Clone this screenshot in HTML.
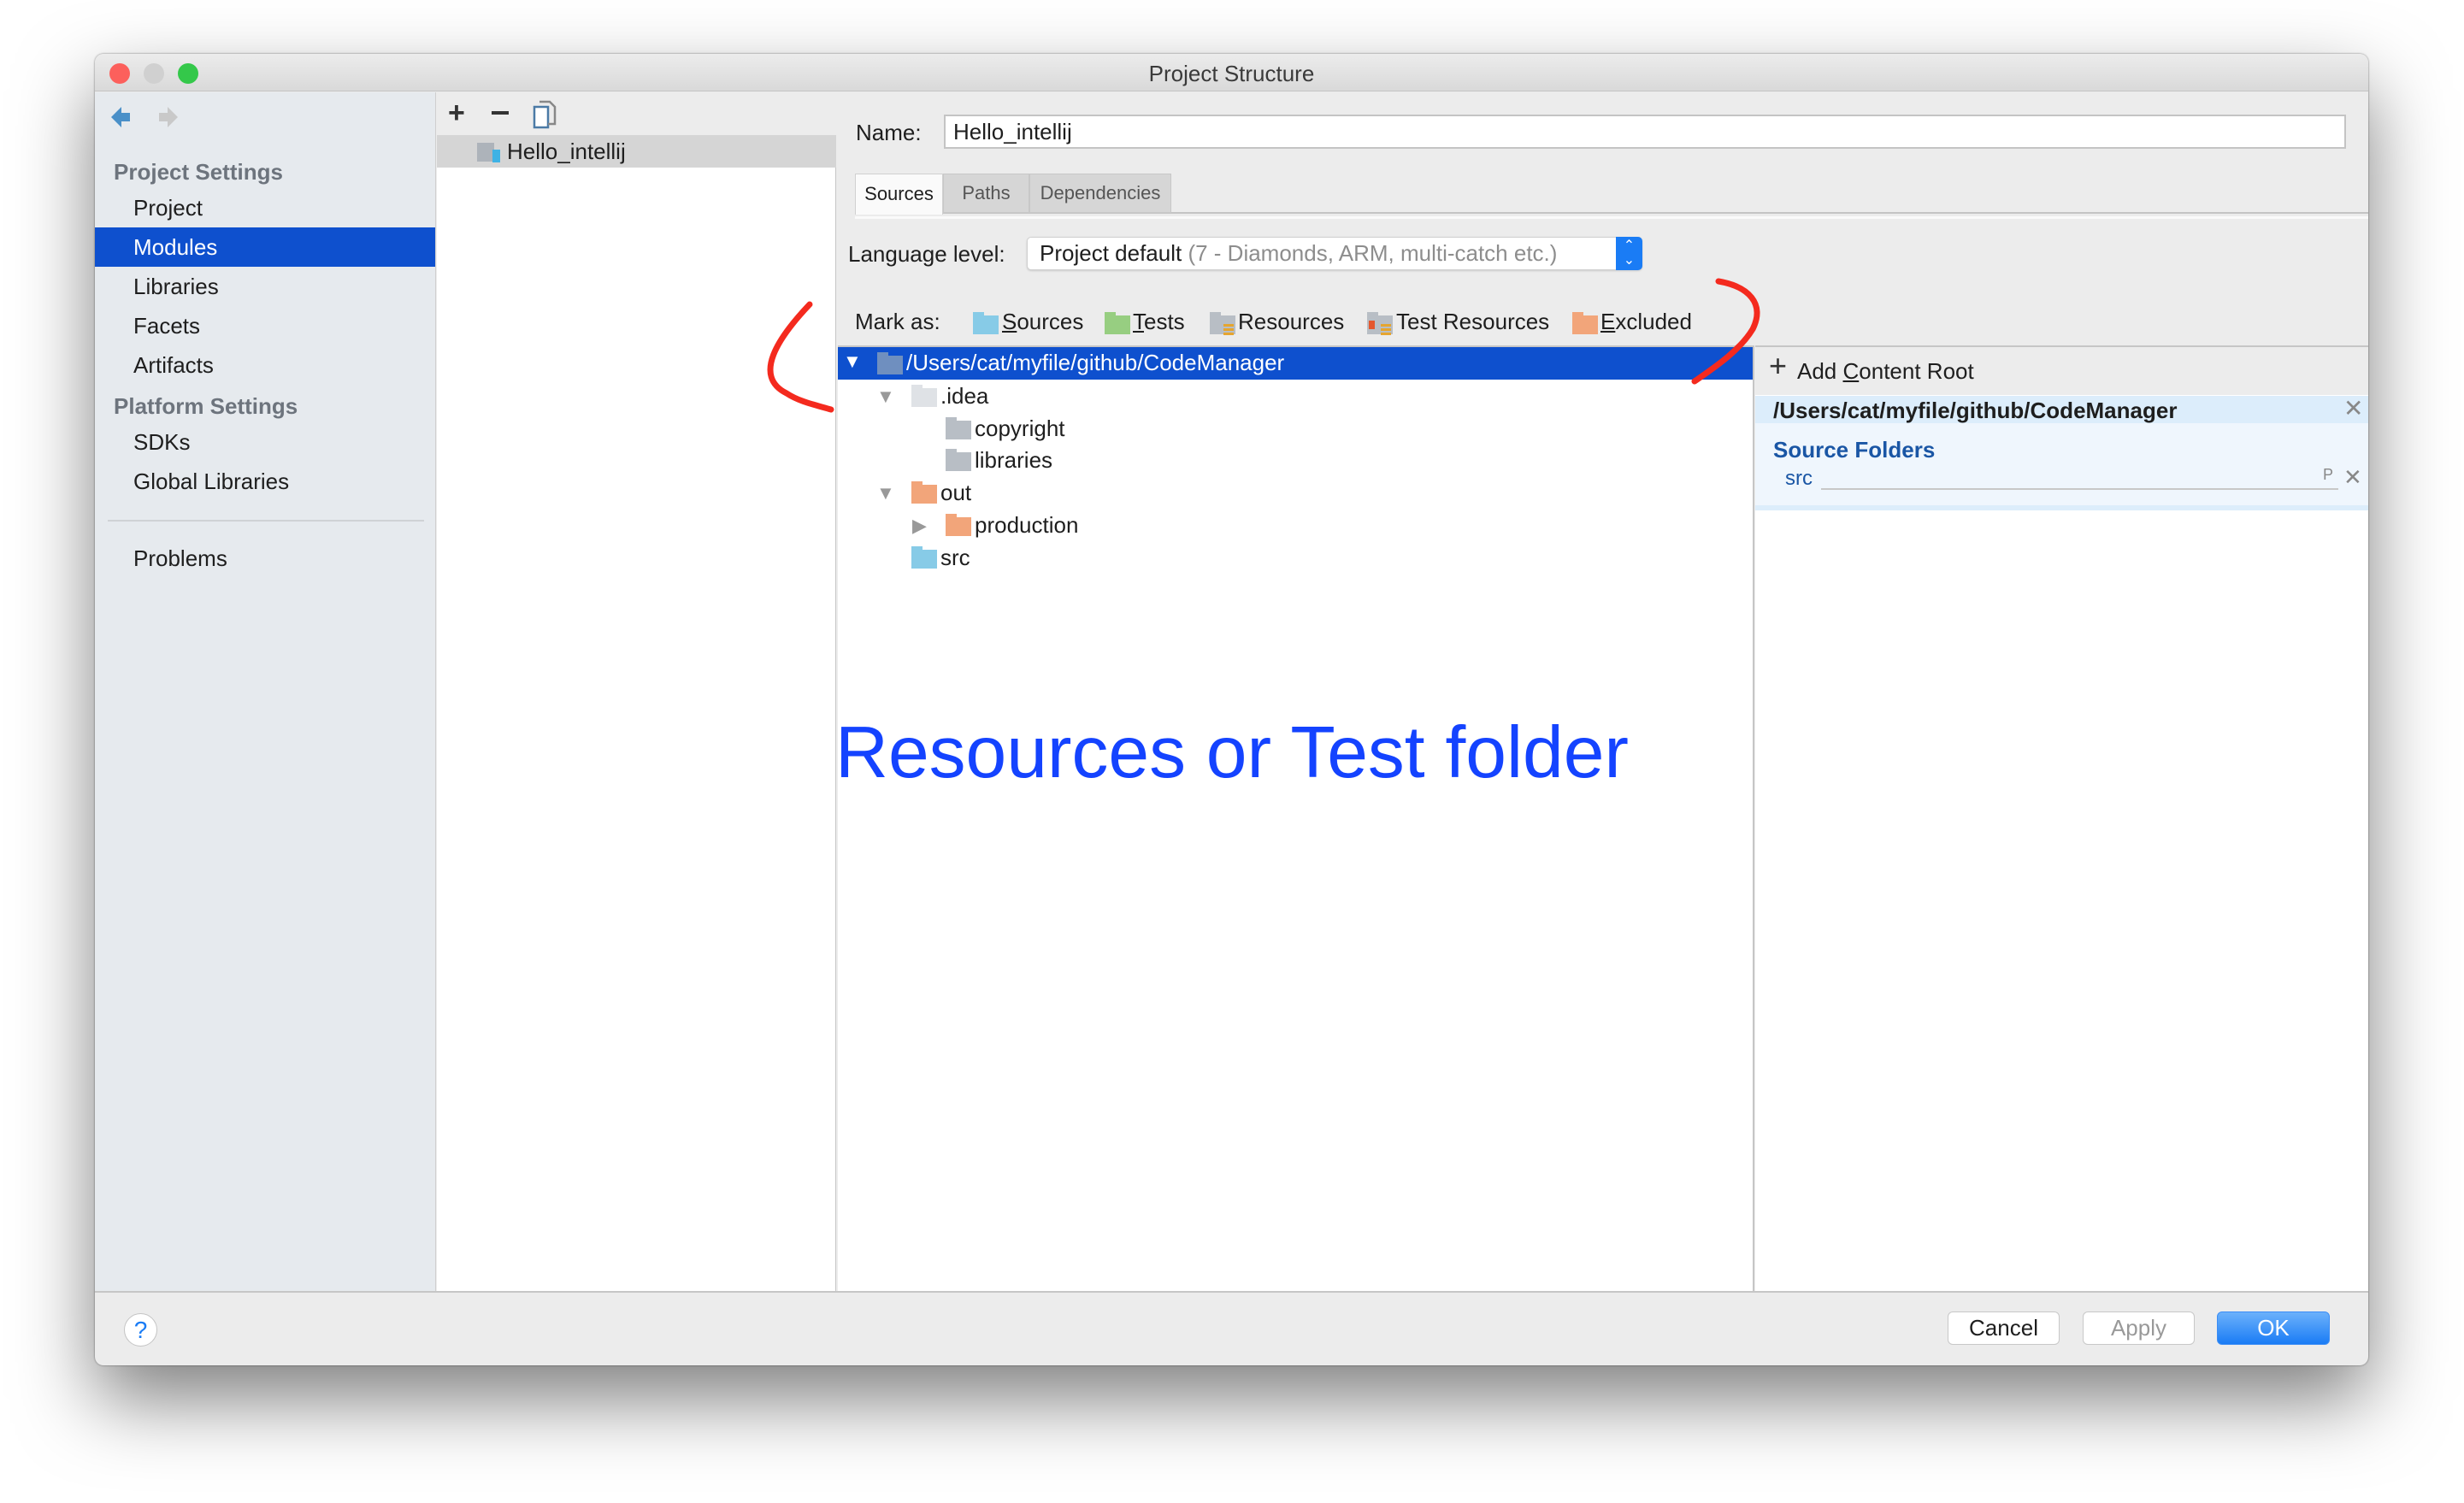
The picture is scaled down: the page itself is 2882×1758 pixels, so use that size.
<!DOCTYPE html>
<html><head><meta charset="utf-8"><style>
*{margin:0;padding:0;box-sizing:border-box}
body{width:2882px;height:1758px;background:#fff;position:relative;overflow:hidden;font-family:"Liberation Sans",sans-serif;color:#1e1e1e}
.a{position:absolute}
.win{left:111px;top:63px;width:2659px;height:1534px;border-radius:10px;background:#ececec;box-shadow:0 40px 90px rgba(0,0,0,.5),0 0 2px rgba(0,0,0,.5);overflow:hidden}
.t{font-size:26px;line-height:30px;white-space:nowrap}
.hd{color:#6d747d;font-weight:bold;font-size:26px}
.fold{position:absolute;width:30px;height:22px}
.fold:before{content:"";position:absolute;left:0;top:-4px;width:13px;height:6px;background:inherit}
.btn{position:absolute;height:39px;border-radius:6px;background:#fff;border:1px solid #c8c8c8;font-size:26px;text-align:center;line-height:37px}
</style></head><body>
<div class="a win">
 <div class="a" style="left:0;top:0;width:2659px;height:44px;background:linear-gradient(#ececec,#d9d9d9);border-bottom:1px solid #c4c4c4"></div>
 <div class="a" style="left:17px;top:11px;width:24px;height:24px;border-radius:50%;background:#fc605c"></div>
 <div class="a" style="left:57px;top:11px;width:24px;height:24px;border-radius:50%;background:#d0d0d0"></div>
 <div class="a" style="left:97px;top:11px;width:24px;height:24px;border-radius:50%;background:#34c84a"></div>
 <div class="a t" style="left:0;width:2659px;top:8px;text-align:center;color:#3a3a3a">Project Structure</div>
 <div class="a" style="left:0;top:45px;width:399px;height:1403px;background:#e6eaee;border-right:1px solid #cfcfcf"></div>
 <svg class="a" style="left:15px;top:58px" width="90" height="32"><path d="M4 16 L16 4 V11 H26 V21 H16 V28Z" fill="#4a90c8"/><path d="M82 16 L70 4 V11 H60 V21 H70 V28Z" fill="#c9c9c9"/></svg>
 <div class="a hd t" style="left:22px;top:123px">Project Settings</div>
 <div class="a t" style="left:45px;top:165px">Project</div>
 <div class="a" style="left:0;top:203px;width:398px;height:46px;background:#0e50ce"></div>
 <div class="a t" style="left:45px;top:211px;color:#fff">Modules</div>
 <div class="a t" style="left:45px;top:257px">Libraries</div>
 <div class="a t" style="left:45px;top:303px">Facets</div>
 <div class="a t" style="left:45px;top:349px">Artifacts</div>
 <div class="a hd t" style="left:22px;top:397px">Platform Settings</div>
 <div class="a t" style="left:45px;top:439px">SDKs</div>
 <div class="a t" style="left:45px;top:485px">Global Libraries</div>
 <div class="a" style="left:15px;top:545px;width:370px;height:2px;background:#cfd2d5"></div>
 <div class="a t" style="left:45px;top:575px">Problems</div>
 <div class="a" style="left:400px;top:45px;width:467px;height:1403px;background:#fff;border-right:1px solid #c6c6c6"></div>
 <div class="a" style="left:400px;top:45px;width:467px;height:50px;background:#ececec"></div>
 <div class="a" style="left:400px;top:95px;width:467px;height:38px;background:#d5d5d5"></div>
 <div class="a" style="left:413px;top:50px;font-size:34px;font-weight:bold;color:#333">+</div>
 <div class="a" style="left:464px;top:67px;width:20px;height:4px;background:#333"></div>
 <svg class="a" style="left:512px;top:54px" width="30" height="34"><rect x="2" y="8" width="16" height="24" fill="#fff" stroke="#4b7aa6" stroke-width="2.5"/><path d="M8 2h12l6 6v20h-8" fill="none" stroke="#888" stroke-width="2.5"/></svg>
 <div class="a" style="left:447px;top:104px;width:20px;height:22px;background:#adb3ba"></div>
 <div class="a" style="left:465px;top:112px;width:9px;height:15px;background:#3eb2e5"></div>
 <div class="a t" style="left:482px;top:99px">Hello_intellij</div>
 <div class="a t" style="left:890px;top:77px">Name:</div>
 <div class="a" style="left:993px;top:71px;width:1640px;height:40px;background:#fff;border:2px solid #c4c4c4"></div>
 <div class="a t" style="left:1004px;top:76px">Hello_intellij</div>
 <div class="a" style="left:889px;top:140px;width:1770px;height:47px;border-bottom:2px solid #c4c4c4"></div>
 <div class="a" style="left:889px;top:190px;width:1770px;height:3px;background:#fafafa"></div>
 <div class="a" style="left:889px;top:140px;width:103px;height:48px;background:#fafafa;border:1px solid #d0d0d0;border-bottom:none;font-size:22px;text-align:center;line-height:46px">Sources</div>
 <div class="a" style="left:992px;top:140px;width:101px;height:46px;background:#d6d6d6;border:1px solid #c8c8c8;font-size:22px;text-align:center;line-height:44px;color:#555">Paths</div>
 <div class="a" style="left:1093px;top:140px;width:166px;height:46px;background:#d6d6d6;border:1px solid #c8c8c8;font-size:22px;text-align:center;line-height:44px;color:#555">Dependencies</div>
 <div class="a t" style="left:881px;top:219px">Language level:</div>
 <div class="a" style="left:1090px;top:214px;width:720px;height:39px;background:#fff;border:1px solid #d0d0d0;border-radius:5px;box-shadow:0 1px 2px rgba(0,0,0,.15)"></div>
 <div class="a t" style="left:1105px;top:218px">Project default <span style="color:#8d8d8d">(7 - Diamonds, ARM, multi-catch etc.)</span></div>
 <div class="a" style="left:1779px;top:214px;width:31px;height:39px;background:#1a7cf5;border-radius:0 5px 5px 0;color:#fff;font-size:16px;text-align:center;line-height:17px;padding-top:2px">&#8963;<br>&#8964;</div>
 <div class="a t" style="left:889px;top:298px">Mark as:</div>
 <div class="fold" style="left:1027px;top:306px;background:#87cbe7"></div>
 <div class="a t" style="left:1061px;top:298px"><u>S</u>ources</div>
 <div class="fold" style="left:1181px;top:306px;background:#97ce81"></div>
 <div class="a t" style="left:1214px;top:298px"><u>T</u>ests</div>
 <div class="fold" style="left:1304px;top:306px;background:#b8bec5"></div>
 <div class="a" style="left:1320px;top:316px;width:12px;height:14px;background:repeating-linear-gradient(#e5a530 0 3px,transparent 3px 5px)"></div>
 <div class="a t" style="left:1337px;top:298px">Resources</div>
 <div class="fold" style="left:1488px;top:306px;background:#b8bec5"></div>
 <div class="a" style="left:1490px;top:312px;width:7px;height:10px;background:#e4572e"></div>
 <div class="a" style="left:1504px;top:316px;width:12px;height:14px;background:repeating-linear-gradient(#e5a530 0 3px,transparent 3px 5px)"></div>
 <div class="a t" style="left:1522px;top:298px">Test Resources</div>
 <div class="fold" style="left:1728px;top:306px;background:#f2a57a"></div>
 <div class="a t" style="left:1761px;top:298px"><u>E</u>xcluded</div>
 <div class="a" style="left:869px;top:341px;width:1072px;height:1107px;background:#fff;border-top:2px solid #c6c6c6;border-right:2px solid #c6c6c6"></div>
 <div class="a" style="left:869px;top:343px;width:1070px;height:38px;background:#0e50ce"></div>
 <div class="a" style="left:875px;top:347px;color:#fff;font-size:22px">&#9660;</div>
 <div class="fold" style="left:915px;top:353px;background:#6f8fbf"></div>
 <div class="a t" style="left:949px;top:346px;color:#fff">/Users/cat/myfile/github/CodeManager</div>
 <div class="a" style="left:914px;top:388px;color:#999;font-size:22px">&#9660;</div>
 <div class="fold" style="left:955px;top:391px;background:#dfe2e6"></div>
 <div class="a t" style="left:989px;top:385px">.idea</div>
 <div class="fold" style="left:995px;top:429px;background:#b8bec5"></div>
 <div class="a t" style="left:1029px;top:423px">copyright</div>
 <div class="fold" style="left:995px;top:466px;background:#b8bec5"></div>
 <div class="a t" style="left:1029px;top:460px">libraries</div>
 <div class="a" style="left:914px;top:501px;color:#999;font-size:22px">&#9660;</div>
 <div class="fold" style="left:955px;top:504px;background:#f2a57a"></div>
 <div class="a t" style="left:989px;top:498px">out</div>
 <div class="a" style="left:956px;top:539px;color:#999;font-size:22px">&#9654;</div>
 <div class="fold" style="left:995px;top:542px;background:#f2a57a"></div>
 <div class="a t" style="left:1029px;top:536px">production</div>
 <div class="fold" style="left:955px;top:580px;background:#87cbe7"></div>
 <div class="a t" style="left:989px;top:574px">src</div>
 <div class="a" style="left:1942px;top:341px;width:717px;height:1107px;background:#fff;border-top:2px solid #c6c6c6"></div>
 <div class="a" style="left:1942px;top:343px;width:717px;height:56px;background:#ececec"></div>
 <div class="a" style="left:1958px;top:344px;font-size:36px;color:#333">+</div>
 <div class="a t" style="left:1991px;top:356px">Add <u>C</u>ontent Root</div>
 <div class="a" style="left:1942px;top:400px;width:717px;height:32px;background:#dcedfb"></div>
 <div class="a t" style="left:1963px;top:402px;font-weight:bold">/Users/cat/myfile/github/CodeManager</div>
 <div class="a" style="left:2630px;top:398px;font-size:28px;color:#888">&#10005;</div>
 <div class="a" style="left:1942px;top:432px;width:717px;height:102px;background:#eff6fd;border-bottom:6px solid #dcedfb"></div>
 <div class="a t" style="left:1963px;top:448px;font-weight:bold;color:#1a56a5">Source Folders</div>
 <div class="a t" style="left:1977px;top:482px;color:#1a56a5;font-size:24px">src</div>
 <div class="a" style="left:2019px;top:508px;width:605px;height:2px;background:#c8c8c8"></div>
 <div class="a" style="left:2606px;top:482px;font-size:18px;color:#888">P</div>
 <div class="a" style="left:2630px;top:480px;font-size:26px;color:#888">&#10005;</div>
 <div class="a" style="left:0;top:1447px;width:2659px;height:2px;background:#c6c6c6"></div>
 <div class="a" style="left:34px;top:1473px;width:39px;height:39px;border-radius:50%;background:#fff;border:1px solid #c4c4c4;color:#1a7cf5;font-size:28px;text-align:center;line-height:37px">?</div>
 <div class="btn" style="left:2167px;top:1471px;width:131px">Cancel</div>
 <div class="btn" style="left:2325px;top:1471px;width:131px;color:#999">Apply</div>
 <div class="btn" style="left:2482px;top:1471px;width:132px;background:linear-gradient(#6cb1fb,#1a7cf5);border-color:#3b8df5;color:#fff">OK</div>
</div>
<svg class="a" style="left:0;top:0" width="2882" height="1758">
 <text x="977" y="909" font-family="Liberation Sans" font-size="85" fill="#1443ff" textLength="928" lengthAdjust="spacingAndGlyphs">Resources or Test folder</text>
 <path d="M947 356 C910 395 880 440 920 460 C935 470 955 474 972 479" fill="none" stroke="#f42a1e" stroke-width="7" stroke-linecap="round"/>
 <path d="M2010 329 C2045 335 2065 355 2050 385 C2035 410 2005 430 1982 446" fill="none" stroke="#f42a1e" stroke-width="7" stroke-linecap="round"/>
</svg>
</body></html>
